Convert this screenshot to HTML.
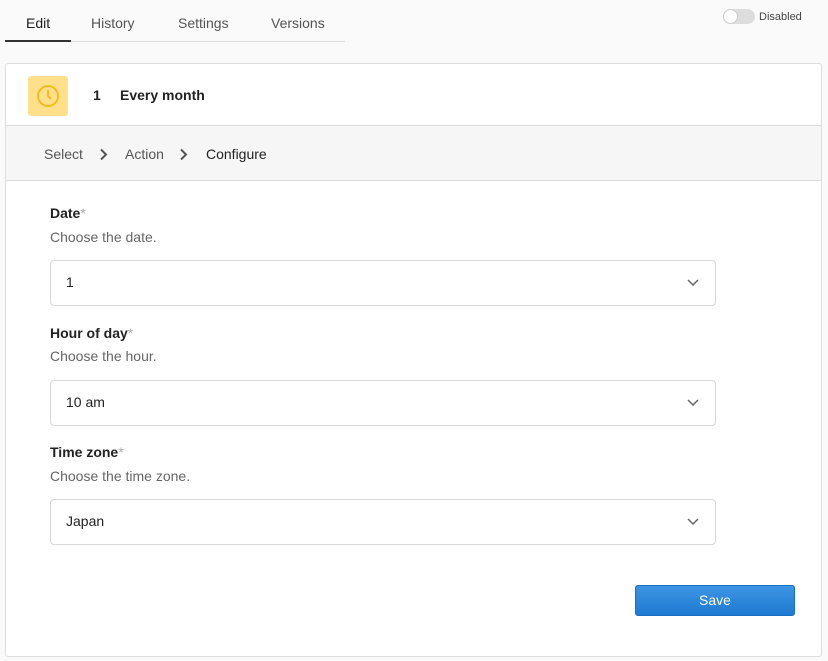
<!DOCTYPE html>
<html><head><meta charset="utf-8"><style>
*{box-sizing:border-box;margin:0;padding:0}
body{width:828px;height:661px;background:#fafafa;font-family:"Liberation Sans",sans-serif;position:relative;overflow:hidden;color:#222}
.tabs{position:absolute;left:5px;top:0;width:340px;height:42px;border-bottom:1px solid #ddd}
.tab{position:absolute;top:15px;font-size:14px;color:#555}
.tabline{position:absolute;left:5px;top:40px;width:66px;height:2px;background:#333}
.tog{position:absolute;left:723px;top:9px;width:32px;height:15px;border-radius:8px;background:#ddd}
.tog::after{content:"";position:absolute;left:0;top:0;width:15px;height:15px;border-radius:50%;background:#fff;border:1px solid #ccc;box-sizing:border-box}
.dis{position:absolute;left:759px;top:11px;font-size:11px;color:#444}
.card{position:absolute;left:5px;top:63px;width:817px;height:594px;background:#fff;border:1px solid #ddd;border-radius:3px}
.icon{position:absolute;left:22px;top:12px;width:40px;height:40px;background:#ffe08a;border-radius:3px}
.hdr{position:absolute;top:23px;font-size:14px;font-weight:bold;color:#222}
.bc{position:absolute;left:0;top:61px;width:815px;height:56px;background:#f6f6f6;border-top:1px solid #ddd;border-bottom:1px solid #ddd}
.bc span{position:absolute;top:20px;font-size:14px;color:#555}
.lbl{position:absolute;left:44px;font-size:14px;font-weight:bold;color:#222}
.lbl i{font-style:normal;font-weight:normal;color:#aaa}
.hint{position:absolute;left:44px;font-size:14px;color:#666}
.sel{position:absolute;left:44px;width:666px;height:46px;border:1px solid #d8d8d8;border-radius:4px;font-size:14px;padding:13px 0 0 15px;color:#222}
.sel svg{position:absolute;right:16px;top:18px}
.btn{position:absolute;left:629px;top:521px;width:160px;height:31px;border-radius:3px;background:linear-gradient(#3d95e2,#1e7ad2);border:1px solid #1b6fc0;color:#fff;font-size:14px;text-align:center;line-height:29px}
</style></head><body>
<div class="tabs"></div>
<div class="tab" style="left:26px;color:#222">Edit</div>
<div class="tab" style="left:91px">History</div>
<div class="tab" style="left:178px">Settings</div>
<div class="tab" style="left:271px">Versions</div>
<div class="tabline"></div>
<div class="tog"></div><div class="dis">Disabled</div>
<div class="card">
<div class="icon"><svg width="40" height="40" viewBox="0 0 40 40"><circle cx="20" cy="20" r="10" fill="none" stroke="#f5b818" stroke-width="1.8"/><path d="M20 14v6l3 3" fill="none" stroke="#f5b818" stroke-width="1.8"/></svg></div>
<div class="hdr" style="left:87px">1</div>
<div class="hdr" style="left:114px">Every month</div>
<div class="bc">
<span style="left:38px">Select</span>
<svg style="position:absolute;left:93px;top:22px" width="10" height="13" viewBox="0 0 10 13"><path d="M2 1.5l5 5-5 5" fill="none" stroke="#555" stroke-width="2"/></svg>
<span style="left:119px">Action</span>
<svg style="position:absolute;left:173px;top:22px" width="10" height="13" viewBox="0 0 10 13"><path d="M2 1.5l5 5-5 5" fill="none" stroke="#555" stroke-width="2"/></svg>
<span style="left:200px;color:#222">Configure</span>
</div>
<div class="lbl" style="top:141px">Date<i>*</i></div>
<div class="hint" style="top:165px">Choose the date.</div>
<div class="sel" style="top:196px">1<svg width="12" height="8" viewBox="0 0 12 8"><path d="M1 1l5 5 5-5" fill="none" stroke="#666" stroke-width="1.5"/></svg></div>
<div class="lbl" style="top:261px">Hour of day<i>*</i></div>
<div class="hint" style="top:284px">Choose the hour.</div>
<div class="sel" style="top:316px">10 am<svg width="12" height="8" viewBox="0 0 12 8"><path d="M1 1l5 5 5-5" fill="none" stroke="#666" stroke-width="1.5"/></svg></div>
<div class="lbl" style="top:380px">Time zone<i>*</i></div>
<div class="hint" style="top:404px">Choose the time zone.</div>
<div class="sel" style="top:435px">Japan<svg width="12" height="8" viewBox="0 0 12 8"><path d="M1 1l5 5 5-5" fill="none" stroke="#666" stroke-width="1.5"/></svg></div>
<div class="btn">Save</div>
</div>
</body></html>
